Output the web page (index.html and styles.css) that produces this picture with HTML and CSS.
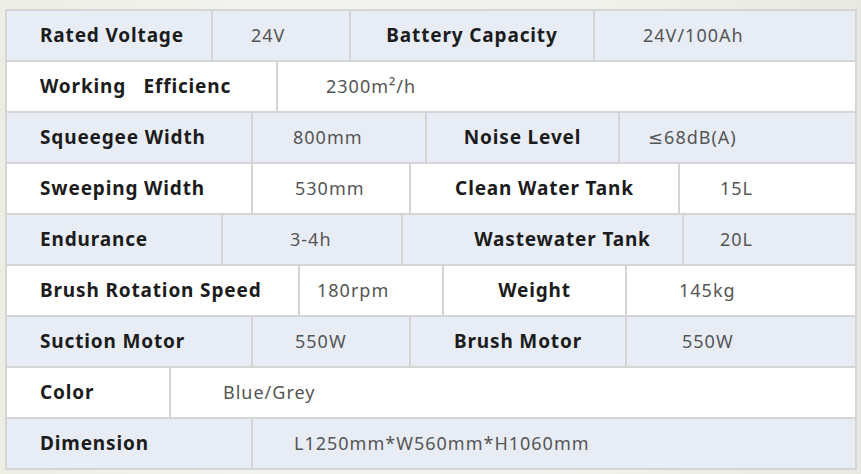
FILE: index.html
```html
<!DOCTYPE html>
<html lang="en">
<head>
<meta charset="utf-8">
<title>Specifications</title>
<link rel="stylesheet" href="styles.css">
</head>
<body>
<div class="spec">
  <div class="row r1 tint">
    <div class="c lab">Rated Voltage</div>
    <div class="c val">24V</div>
    <div class="c lab ctr">Battery Capacity</div>
    <div class="c val">24V/100Ah</div>
  </div>
  <div class="row r2">
    <div class="c lab">Working&nbsp;&nbsp; Efficienc</div>
    <div class="c val">2300m²/h</div>
  </div>
  <div class="row r3 tint">
    <div class="c lab">Squeegee Width</div>
    <div class="c val">800mm</div>
    <div class="c lab ctr">Noise Level</div>
    <div class="c val">≤68dB(A)</div>
  </div>
  <div class="row r4">
    <div class="c lab">Sweeping Width</div>
    <div class="c val">530mm</div>
    <div class="c lab ctr">Clean Water Tank</div>
    <div class="c val">15L</div>
  </div>
  <div class="row r5 tint">
    <div class="c lab">Endurance</div>
    <div class="c val">3-4h</div>
    <div class="c lab ctr">Wastewater Tank</div>
    <div class="c val">20L</div>
  </div>
  <div class="row r6">
    <div class="c lab">Brush Rotation Speed</div>
    <div class="c val">180rpm</div>
    <div class="c lab ctr">Weight</div>
    <div class="c val">145kg</div>
  </div>
  <div class="row r7 tint">
    <div class="c lab">Suction Motor</div>
    <div class="c val">550W</div>
    <div class="c lab ctr">Brush Motor</div>
    <div class="c val">550W</div>
  </div>
  <div class="row r8">
    <div class="c lab">Color</div>
    <div class="c val">Blue/Grey</div>
  </div>
  <div class="row r9 tint">
    <div class="c lab">Dimension</div>
    <div class="c val">L1250mm*W560mm*H1060mm</div>
  </div>
</div>
</body>
</html>
```

FILE: styles.css
```css
html, body {
  margin: 0;
  padding: 0;
}
body {
  width: 861px;
  height: 474px;
  overflow: hidden;
  background: linear-gradient(90deg, #eceee4 0%, #f3f3ef 30%, #f1f1ec 70%, #e9e9e4 100%);
  font-family: "Noto Sans", "DejaVu Sans", sans-serif;
}
.spec {
  margin: 9px 0 0 5px;
  width: 848px;
  border: 2px solid #d5d5d5;
  border-bottom: none;
  background: #fff;
}
.row {
  display: flex;
  height: 49px;
  border-bottom: 2px solid #d5d5d5;
  background: #fff;
}
.row.tint {
  background: #e8edf5;
}
.c {
  display: flex;
  align-items: center;
  box-sizing: border-box;
  border-right: 2px solid #d5d5d5;
  white-space: nowrap;
  padding-bottom: 2px;
}
.c:last-child {
  border-right: none;
  flex: 1;
}
.lab {
  padding-left: 33px;
  font-size: 19px;
  font-weight: 700;
  color: #1c1c1c;
  letter-spacing: 0.85px;
}
.lab.ctr {
  padding-left: 0;
  justify-content: center;
}
.val {
  font-size: 18px;
  font-weight: 400;
  color: #555;
  letter-spacing: 1px;
}

/* column widths and value offsets */
.r1 .c:nth-child(1) { width: 206px; }
.r1 .c:nth-child(2) { width: 138px; padding-left: 38px; }
.r1 .c:nth-child(3) { width: 244px; }
.r1 .c:nth-child(4) { padding-left: 48px; }

.r2 .c:nth-child(1) { width: 271px; }
.r2 .c:nth-child(2) { padding-left: 48px; }

.r3 .c:nth-child(1) { width: 246px; }
.r3 .c:nth-child(2) { width: 174px; padding-left: 40px; }
.r3 .c:nth-child(3) { width: 193px; }
.r3 .c:nth-child(4) { padding-left: 28px; }

.r4 .c:nth-child(1) { width: 246px; }
.r4 .c:nth-child(2) { width: 158px; padding-left: 42px; }
.r4 .c:nth-child(3) { width: 269px; }
.r4 .c:nth-child(4) { padding-left: 40px; }

.r5 .c:nth-child(1) { width: 216px; }
.r5 .c:nth-child(2) { width: 180px; padding-left: 67px; }
.r5 .c:nth-child(3) { width: 281px; padding-left: 40px; }
.r5 .c:nth-child(4) { padding-left: 36px; }

.r6 .c:nth-child(1) { width: 293px; }
.r6 .c:nth-child(2) { width: 144px; padding-left: 17px; }
.r6 .c:nth-child(3) { width: 183px; }
.r6 .c:nth-child(4) { padding-left: 52px; }

.r7 .c:nth-child(1) { width: 246px; }
.r7 .c:nth-child(2) { width: 158px; padding-left: 42px; }
.r7 .c:nth-child(3) { width: 216px; }
.r7 .c:nth-child(4) { padding-left: 55px; }

.r8 .c:nth-child(1) { width: 164px; }
.r8 .c:nth-child(2) { padding-left: 52px; }

.r9 .c:nth-child(1) { width: 246px; }
.r9 .c:nth-child(2) { padding-left: 41px; }
```
